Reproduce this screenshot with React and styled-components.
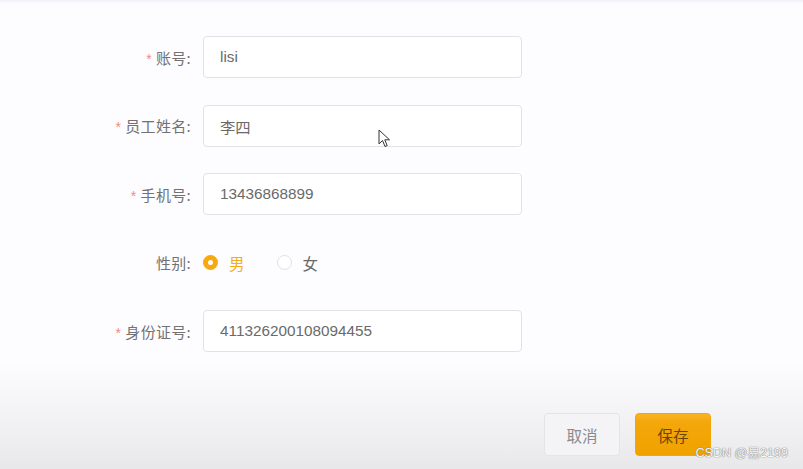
import React from "react";
import styled, { createGlobalStyle } from "styled-components";

const Global = createGlobalStyle`
  html, body { margin: 0; padding: 0; }
  body {
    font-family: "Liberation Sans", "Noto Sans CJK SC", sans-serif;
    -webkit-font-smoothing: antialiased;
  }
`;

const Page = styled.div`
  position: relative;
  width: 803px;
  height: 469px;
  overflow: hidden;
  background: linear-gradient(
    to bottom,
    #f2f0f6 0px,
    #fdfcfe 4px,
    #fdfcfe 360px,
    #f6f5f7 400px,
    #eeedef 440px,
    #e8e7e9 469px
  );
`;

const Form = styled.div`
  display: flex;
  flex-direction: column;
  gap: 26.5px;
  padding-top: 36px;
`;

const Row = styled.div`
  display: grid;
  grid-template-columns: 191px 319px;
  column-gap: 12px;
  align-items: center;
  height: 42px;
`;

const Label = styled.label`
  text-align: right;
  font-size: 15px;
  color: #727272;
  font-family: "Noto Sans CJK SC", sans-serif;
  letter-spacing: 0.3px;
`;

const Star = styled.span`
  color: #f08a8a;
  margin-right: 4px;
  font-size: 14px;
  font-family: "Liberation Sans", sans-serif;
`;

const Input = styled.div`
  height: 42px;
  box-sizing: border-box;
  border: 1px solid #e2e2e6;
  border-radius: 4px;
  background: #ffffff;
  padding-left: 16px;
  display: flex;
  align-items: center;
  font-size: 15.3px;
  color: #6a6a6a;
  font-family: "Liberation Sans", "Noto Sans CJK SC", sans-serif;
`;

const RadioGroup = styled.div`
  display: flex;
  align-items: center;
  gap: 32px;
`;

const RadioItem = styled.div`
  display: flex;
  align-items: center;
  gap: 11px;
  font-size: 15.5px;
  font-family: "Noto Sans CJK SC", sans-serif;
  color: ${(p) => (p.$checked ? "#f5ad1b" : "#6a6a6a")};
`;

const RadioDot = styled.span`
  width: 15px;
  height: 15px;
  box-sizing: border-box;
  border-radius: 50%;
  display: inline-flex;
  align-items: center;
  justify-content: center;
  background: ${(p) => (p.$checked ? "#f7a90e" : "#ffffff")};
  border: 1px solid ${(p) => (p.$checked ? "#f7a90e" : "#e0e0e4")};
  &::after {
    content: "";
    width: 5px;
    height: 5px;
    border-radius: 50%;
    background: #ffffff;
    display: ${(p) => (p.$checked ? "block" : "none")};
  }
`;

const Footer = styled.div`
  display: flex;
  justify-content: flex-end;
  gap: 15px;
  padding-right: 92px;
  margin-top: 61px;
`;

const Button = styled.div`
  width: 76px;
  height: 43px;
  box-sizing: border-box;
  border-radius: 4px;
  display: flex;
  align-items: center;
  justify-content: center;
  font-size: 15.5px;
  font-family: "Noto Sans CJK SC", sans-serif;
  color: ${(p) => (p.$primary ? "#6e4406" : "#8a8a8e")};
  background: ${(p) =>
    p.$primary
      ? "linear-gradient(to bottom, #f9b425 0%, #f4a70a 20%, #f0a200 100%)"
      : "#f4f3f5"};
  border: 1px solid ${(p) => (p.$primary ? "#f3a60c" : "#e4e3e6")};
`;

const Watermark = styled.div`
  position: absolute;
  right: 15px;
  bottom: 8px;
  font-size: 12.6px;
  font-family: "Liberation Sans", "Noto Sans CJK SC", sans-serif;
  color: #f7f7f7;
  text-shadow: 0 0 1px #7a7a7a, 0 0 1px #7a7a7a;
`;

const Cursor = styled.svg`
  position: absolute;
  left: 378px;
  top: 129px;
`;

const fields = [
  { label: "账号", value: "lisi", required: true },
  { label: "员工姓名", value: "李四", required: true },
  { label: "手机号", value: "13436868899", required: true },
];

export default function App() {
  return (
    <Page>
      <Global />
      <Form>
        {fields.map((f) => (
          <Row key={f.label}>
            <Label>
              {f.required && <Star>*</Star>}
              {f.label}:
            </Label>
            <Input>{f.value}</Input>
          </Row>
        ))}
        <Row>
          <Label>性别:</Label>
          <RadioGroup>
            <RadioItem $checked>
              <RadioDot $checked />
              男
            </RadioItem>
            <RadioItem>
              <RadioDot />
              女
            </RadioItem>
          </RadioGroup>
        </Row>
        <Row>
          <Label>
            <Star>*</Star>身份证号:
          </Label>
          <Input>411326200108094455</Input>
        </Row>
      </Form>
      <Footer>
        <Button>取消</Button>
        <Button $primary>保存</Button>
      </Footer>
      <Cursor width="13" height="19" viewBox="0 0 13 19">
        <path
          d="M1 1 L1 15 L4.5 11.5 L7 17.5 L9.2 16.6 L6.8 10.8 L11.5 10.8 Z"
          fill="#ffffff"
          stroke="#333333"
          strokeWidth="1"
          strokeLinejoin="round"
        />
      </Cursor>
      <Watermark>CSDN @易2199</Watermark>
    </Page>
  );
}
